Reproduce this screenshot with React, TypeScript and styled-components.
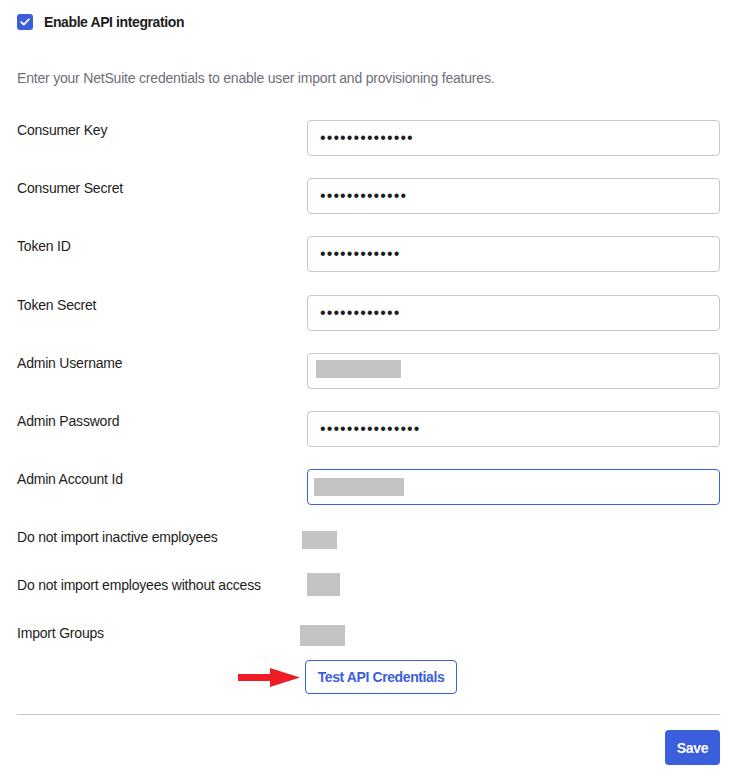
import React from "react";
import styled, { createGlobalStyle } from "styled-components";

const FONT = `"Liberation Sans", Arial, sans-serif`;

const Global = createGlobalStyle`
  html, body { margin: 0; padding: 0; background: #ffffff; }
  body { font-family: ${FONT}; color: #1d1d21; }
  * { box-sizing: border-box; }
`;

const Page = styled.div`
  width: 734px;
  padding: 14px 14px 0 17px;
  display: flex;
  flex-direction: column;
`;

const Header = styled.label`
  display: flex;
  align-items: center;
  gap: 11px;
  height: 16px;
  font-size: 14px;
  font-weight: 700;
  letter-spacing: -0.4px;
  color: #1d1d21;
`;

const CheckBox = styled.span`
  width: 16px;
  height: 16px;
  border-radius: 3px;
  background: #3b5edc;
  display: inline-flex;
  align-items: center;
  justify-content: center;
`;

const Description = styled.p`
  margin: 38px 0 0;
  font-size: 14px;
  line-height: 20px;
  letter-spacing: -0.2px;
  color: #6e6e78;
`;

const Form = styled.div`
  margin-top: 32px;
  display: grid;
  grid-template-columns: 290px 413px;
  row-gap: 22.2px;
`;

const Label = styled.div`
  font-size: 14px;
  line-height: 20px;
  letter-spacing: -0.2px;
  color: #1d1d21;
`;

const Field = styled.div<{ $focused?: boolean }>`
  height: 36px;
  border: 1px solid ${(p) => (p.$focused ? "#3b5edc" : "#c6c6cc")};
  border-radius: 4px;
  display: flex;
  align-items: center;
  padding-left: 12px;
  background: #fff;
`;

const Secret = styled.input`
  border: none;
  outline: none;
  padding: 0;
  width: 100%;
  background: transparent;
  font-family: ${FONT};
  font-size: 16px;
  letter-spacing: 1.1px;
  color: #1d1d21;
`;

const Redacted = styled.div<{ $w: number; $h: number; $dx: number; $dy: number }>`
  width: ${(p) => p.$w}px;
  height: ${(p) => p.$h}px;
  margin-left: ${(p) => p.$dx}px;
  margin-top: ${(p) => p.$dy}px;
  background: #c3c3c3;
`;

const FieldRedacted = styled(Field)`
  padding-left: 0;
  align-items: flex-start;
`;

const Toggles = styled.div`
  margin-top: 8px;
  display: grid;
  grid-template-columns: 290px 413px;
`;

const ToggleLabel = styled.div`
  height: 48px;
  padding-top: 14px;
  font-size: 14px;
  line-height: 20px;
  letter-spacing: -0.2px;
  color: #1d1d21;
`;

const ToggleCell = styled.div`
  height: 48px;
`;

const ActionRow = styled.div`
  margin-top: 3px;
  display: grid;
  grid-template-columns: 290px 413px;
  align-items: center;
`;

const ArrowCell = styled.div`
  display: flex;
  justify-content: flex-end;
  padding-right: 7px;
`;

const OutlineButton = styled.button`
  justify-self: start;
  margin-left: -2px;
  height: 34px;
  width: 152px;
  padding: 0;
  border: 1px solid #3b5edc;
  border-radius: 4px;
  background: #fff;
  color: #3b5edc;
  font-family: ${FONT};
  font-size: 14px;
  font-weight: 700;
  letter-spacing: -0.4px;
  cursor: pointer;
`;

const Divider = styled.hr`
  margin: 20px 0 0;
  width: 703px;
  border: none;
  border-top: 1px solid #c6c6cc;
`;

const Footer = styled.div`
  width: 703px;
  margin-top: 15px;
  display: flex;
  justify-content: flex-end;
`;

const PrimaryButton = styled.button`
  height: 35px;
  width: 55px;
  border: none;
  border-radius: 4px;
  background: #3b5edc;
  color: #fff;
  font-family: ${FONT};
  font-size: 14px;
  font-weight: 700;
  letter-spacing: -0.3px;
  cursor: pointer;
`;

type Row =
  | { label: string; kind: "secret"; count: number }
  | { label: string; kind: "redacted"; w: number; h: number; dx: number; dy: number; focused?: boolean };

const rows: Row[] = [
  { label: "Consumer Key", kind: "secret", count: 14 },
  { label: "Consumer Secret", kind: "secret", count: 13 },
  { label: "Token ID", kind: "secret", count: 12 },
  { label: "Token Secret", kind: "secret", count: 12 },
  { label: "Admin Username", kind: "redacted", w: 85, h: 18, dx: 8, dy: 6 },
  { label: "Admin Password", kind: "secret", count: 15 },
  { label: "Admin Account Id", kind: "redacted", w: 90, h: 18, dx: 6, dy: 8, focused: true },
];

const toggles = [
  { label: "Do not import inactive employees", w: 35, h: 18, dx: 12, dy: 18 },
  { label: "Do not import employees without access", w: 33, h: 23, dx: 17, dy: 12 },
  { label: "Import Groups", w: 45, h: 21, dx: 10, dy: 16 },
];

const Check = () => (
  <svg width="10" height="8" viewBox="0 0 10 8" fill="none">
    <path d="M1.2 4.2 L3.8 6.6 L8.8 1.4" stroke="#fff" strokeWidth="1.8" strokeLinecap="round" strokeLinejoin="round" />
  </svg>
);

const RedArrow = () => (
  <svg width="62" height="19" viewBox="0 0 62 19">
    <polygon points="0,6 32,6 32,0 62,9.5 32,19 32,13 0,13" fill="#ee1c25" />
  </svg>
);

export default function App() {
  return (
    <>
      <Global />
      <Page>
        <Header>
          <CheckBox>
            <Check />
          </CheckBox>
          Enable API integration
        </Header>
        <Description>
          Enter your NetSuite credentials to enable user import and provisioning features.
        </Description>
        <Form>
          {rows.map((r) => (
            <React.Fragment key={r.label}>
              <Label>{r.label}</Label>
              {r.kind === "secret" ? (
                <Field>
                  <Secret type="password" readOnly value={"x".repeat(r.count)} aria-label={r.label} />
                </Field>
              ) : (
                <FieldRedacted $focused={r.focused}>
                  <Redacted $w={r.w} $h={r.h} $dx={r.dx} $dy={r.dy} />
                </FieldRedacted>
              )}
            </React.Fragment>
          ))}
        </Form>
        <Toggles>
          {toggles.map((t) => (
            <React.Fragment key={t.label}>
              <ToggleLabel>{t.label}</ToggleLabel>
              <ToggleCell>
                <Redacted $w={t.w} $h={t.h} $dx={t.dx - 17} $dy={t.dy} />
              </ToggleCell>
            </React.Fragment>
          ))}
        </Toggles>
        <ActionRow>
          <ArrowCell>
            <RedArrow />
          </ArrowCell>
          <OutlineButton>Test API Credentials</OutlineButton>
        </ActionRow>
        <Divider />
        <Footer>
          <PrimaryButton>Save</PrimaryButton>
        </Footer>
      </Page>
    </>
  );
}
